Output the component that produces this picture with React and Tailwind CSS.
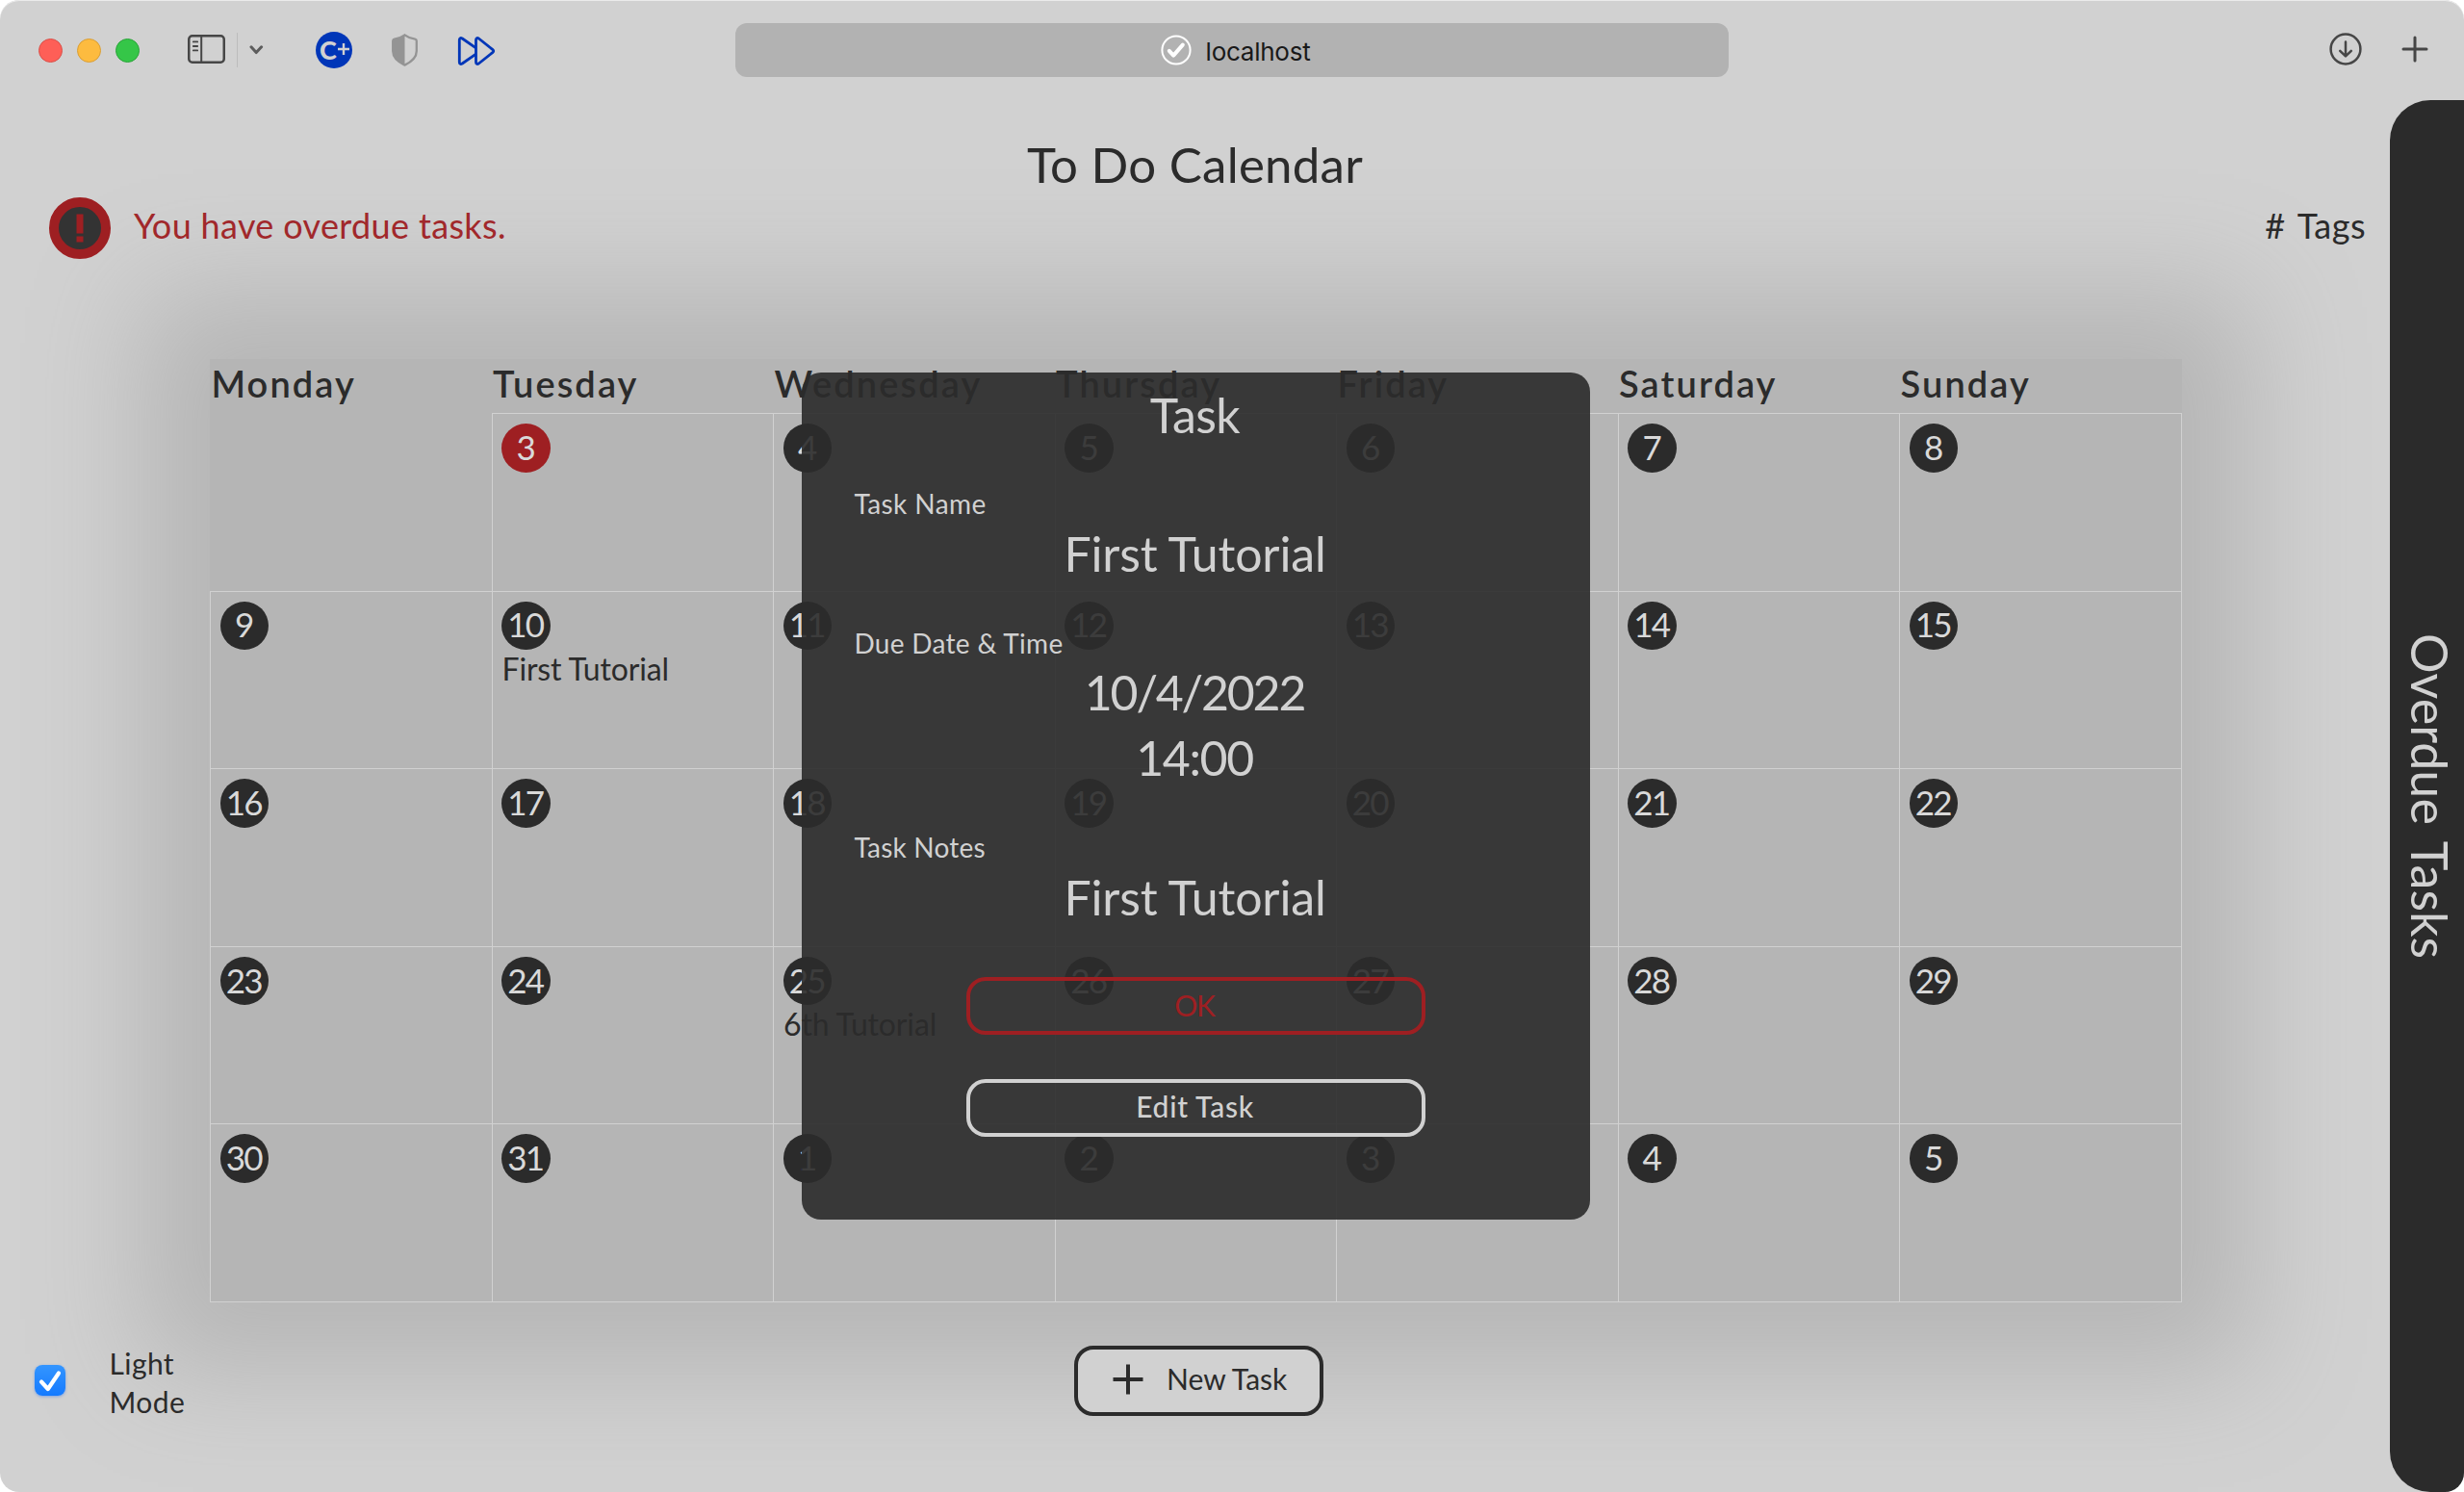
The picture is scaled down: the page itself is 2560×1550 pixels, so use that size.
import React from "react";

const DAYS = ["Monday", "Tuesday", "Wednesday", "Thursday", "Friday", "Saturday", "Sunday"];

const CELLS = [
  null, 3, 4, 5, 6, 7, 8,
  9, 10, 11, 12, 13, 14, 15,
  16, 17, 18, 19, 20, 21, 22,
  23, 24, 25, 26, 27, 28, 29,
  30, 31, 1, 2, 3, 4, 5,
];

const EVENTS = { 8: "First Tutorial", 23: "6th Tutorial" };
const TODAY_INDEX = 1;

function Toolbar() {
  return (
    <header className="flex h-[104px] shrink-0 items-center">
      <div className="flex w-[764px] shrink-0 items-center pl-[39.5px]">
        <div className="flex gap-[15px]">
          <span className="size-[25px] rounded-full border border-[#d9504a] bg-[#fe5f57]" />
          <span className="size-[25px] rounded-full border border-[#d99e35] bg-[#fdbb3f]" />
          <span className="size-[25px] rounded-full border border-[#2ba43a] bg-[#35c648]" />
        </div>
        <svg className="mb-[2px] ml-[50.5px] h-[30px] w-[39px]" viewBox="0 0 39 30" fill="none" stroke="#464646">
          <rect x="1.25" y="1.25" width="36.5" height="27.5" rx="3.5" strokeWidth="2.5" />
          <path d="M14.2 1.5V28.5" strokeWidth="2" />
          <path d="M5.8 7.4h4.4M5.8 12h4.4M5.8 16.4h4.4" strokeWidth="1.8" strokeLinecap="round" />
        </svg>
        <span className="ml-[12px] h-[36px] w-px bg-[#bcbcbc]" />
        <svg className="ml-[12px] h-[10px] w-[15px]" viewBox="0 0 15 10" fill="none" stroke="#5c5c5c" strokeWidth="3" strokeLinecap="round" strokeLinejoin="round">
          <path d="M2 1.8 7.2 7.6 12.6 1.8" />
        </svg>
        <span className="ml-[54px] flex size-[38px] items-center justify-center rounded-full bg-[#0036b8] pb-[1px] pl-[1px] font-['Lato'] font-black leading-none text-[#d1d1d1]">
          <span className="text-[27px] leading-[36px]">C</span>
          <svg className="mb-[1px] ml-px size-[12px]" viewBox="0 0 12 12" stroke="#d1d1d1" strokeWidth="2.4">
            <path d="M6 0v12M0 6h12" />
          </svg>
        </span>
        <svg className="ml-[41px] h-[34px] w-[27px]" viewBox="0 0 27 34" fill="none">
          <path d="M13.5 1.4C10.5 3.6 6.5 5.2 2.8 5.6 1.8 5.8 1.2 6.4 1.2 7.4V18c0 7 5.500 11.400 12.300 14.600C20.300 29.400 25.800 25 25.800 18V7.400c0-1-.6-1.600-1.600-1.800C20.500 5.200 16.500 3.600 13.500 1.400Z" stroke="#949494" strokeWidth="2.300" />
          <path d="M13.500 1.400C10.500 3.600 6.500 5.200 2.800 5.600 1.800 5.800 1.200 6.400 1.200 7.400V18c0 7 5.500 11.400 12.300 14.600Z" fill="#949494" />
        </svg>
        <svg className="ml-[41px] mt-[1px] h-[30px] w-[40px]" viewBox="0 0 40 30" fill="none" stroke="#0036b8" strokeWidth="2.800" strokeLinejoin="round">
          <path d="M19.500 11.800 5.300 2C3.500 1 2.300 1.600 2.300 3.500V26.500c0 1.900 1.200 2.500 3 1.500L19.500 18.200" />
          <path d="M19.500 3.500C19.500 1.600 20.700 1 22.400 2L37 13.600c1 .8 1 2 0 2.800L22.400 28c-1.700 1-2.900.4-2.900-1.500Z" />
        </svg>
      </div>
      <div className="flex h-[56px] w-[1032px] shrink-0 items-center justify-center gap-[15px] rounded-[12px] bg-[#b2b2b2] pl-[7px]">
        <svg className="size-[32px]" viewBox="0 0 32 32" fill="none" stroke="#ffffff" strokeLinecap="round" strokeLinejoin="round">
          <circle cx="16" cy="16" r="14.600" strokeWidth="2" />
          <path d="M8.800 16.800 13.200 21.600 22.800 10.600" strokeWidth="4" />
        </svg>
        <span className="pt-[3px] font-['Inter'] text-[26px] leading-[32px] tracking-[-0.250px] text-[#191919]">localhost</span>
      </div>
      <div className="ml-[624px] flex items-center gap-[41px] pb-[2px] text-[#464646]">
        <svg className="size-[34px]" viewBox="0 0 34 34" fill="none" stroke="currentColor" strokeWidth="2.500" strokeLinecap="round" strokeLinejoin="round">
          <circle cx="17" cy="17" r="15.400" />
          <path d="M17 9.500V24M11.200 18.800 17 24.400 22.800 18.800" />
        </svg>
        <svg className="mb-[1px] size-[28px]" viewBox="0 0 28 28" stroke="currentColor" strokeWidth="3" strokeLinecap="round">
          <path d="M14 2V26M2 14H26" />
        </svg>
      </div>
    </header>
  );
}

function DayCell({ day, index }) {
  const lastCol = index % 7 === 6;
  const lastRow = index >= 28;
  return (
    <div
      className={
        "flex flex-col border-[#d1d1d1] pl-[10px] pt-[10px] " +
        (day === null ? "" : "border-l border-t ") +
        (lastCol ? "border-r " : "") +
        (lastRow ? "border-b" : "")
      }
    >
      {day !== null && (
        <span
          className={
            "-ml-[0.500px] flex size-[50.500px] shrink-0 items-center justify-center rounded-full pb-[3px] pr-[3px] text-[35px] leading-[46px] tracking-[-1.800px] text-[#d9d9d9] " +
            (index === TODAY_INDEX ? "bg-[#9e1f22]" : "bg-[#2b2b2b]")
          }
        >
          <span className="-mr-[1.800px]">{day}</span>
        </span>
      )}
      {EVENTS[index] && (
        <span className="mt-px whitespace-nowrap text-[32px] leading-[38px] tracking-[-0.150px] text-[#2b2b2b]">{EVENTS[index]}</span>
      )}
    </div>
  );
}

function Calendar() {
  return (
    <section className="ml-[218px] mt-[104px] w-[2049px] bg-[#b5b5b5] shadow-[0_0_110px_72px_#b6b6b6]">
      <div className="grid h-[56px] grid-cols-[repeat(6,292.500px)_294px] pl-[1.500px] pt-[2px] text-[38px] font-semibold leading-[46px] tracking-[2.100px] text-[#2b2b2b]">
        {DAYS.map((d) => (
          <span key={d}>{d}</span>
        ))}
      </div>
      <div className="grid h-[924px] grid-cols-[repeat(6,292.500px)_294px] grid-rows-[repeat(4,184.600px)_185.600px]">
        {CELLS.map((day, i) => (
          <DayCell key={i} day={day} index={i} />
        ))}
      </div>
    </section>
  );
}

function Footer() {
  return (
    <footer className="mt-[43px] flex items-start">
      <span className="ml-[36px] mt-[22px] flex size-[32px] items-center justify-center rounded-[8px] bg-linear-to-b from-[#3395ff] to-[#147aff] shadow-[0_1px_3px_#0a60ff66]">
        <svg className="size-[24px]" viewBox="0 0 24 24" fill="none" stroke="#ffffff" strokeWidth="4.200" strokeLinecap="round" strokeLinejoin="round">
          <path d="M3 13.500 9.800 21 21 4.500" />
        </svg>
      </span>
      <p className="ml-[45.500px] w-[100.500px] text-[30px] leading-[40px] tracking-[0.400px] text-[#2b2b2b]">Light Mode</p>
      <button className="ml-[902px] mt-[2px] flex h-[73px] w-[259px] items-center rounded-[20px] border-4 border-[#2b2b2b] bg-[#d1d1d1] pl-[36px] text-[#2b2b2b]">
        <svg className="mb-[4px] size-[32px]" viewBox="0 0 32 32" stroke="currentColor" strokeWidth="4">
          <path d="M16 .5V31.500M.5 16H31.500" />
        </svg>
        <span className="ml-[24px] whitespace-nowrap pb-[6px] text-[30px] leading-[40px]">New Task</span>
      </button>
    </footer>
  );
}

function TaskDialog() {
  return (
    <div className="absolute left-[832.500px] top-[387px] flex h-[880px] w-[819px] flex-col items-center rounded-[20px] bg-[#2b2b2b]/[0.905] pt-[14px] text-[#d1d1d1]">
      <h2 className="pr-px text-[50px] leading-[60px] tracking-[-0.600px]">Task</h2>
      <p className="mt-[45px] self-start pl-[55px] text-[28px] leading-[34px] tracking-[0.400px]">Task Name</p>
      <p className="mt-[5px] pr-px text-[50px] leading-[60px] tracking-[-0.150px]">First Tutorial</p>
      <p className="mt-[46px] self-start pl-[55px] text-[28px] leading-[34px] tracking-[0.300px]">Due Date &amp; Time</p>
      <p className="pr-[2px] text-[50px] leading-[68px] tracking-[-2.200px]">10/4/2022</p>
      <p className="pr-[2px] text-[50px] leading-[68px] tracking-[-1.400px]">14:00</p>
      <p className="mt-[42px] self-start pl-[55px] text-[28px] leading-[34px] tracking-[0.200px]">Task Notes</p>
      <p className="mt-[5px] pr-px text-[50px] leading-[60px] tracking-[-0.150px]">First Tutorial</p>
      <button className="mt-[53px] h-[60px] w-[477px] rounded-[20px] border-4 border-[#9e1f22] pb-[3px] pr-[2px] text-[30px] leading-[48px] tracking-[-1.300px] text-[#9e1f22]">OK</button>
      <button className="mt-[46px] h-[60px] w-[477px] rounded-[20px] border-4 border-[#d1d1d1] pb-[4px] pr-px text-[30px] font-medium leading-[48px] tracking-[0.700px]">Edit Task</button>
    </div>
  );
}

export default function App() {
  return (
    <div className="h-[1550px] w-[2560px] overflow-hidden bg-white font-['Lato',sans-serif]">
      <div className="relative flex h-[1550px] w-[2560px] flex-col overflow-hidden rounded-[20px] bg-[#d1d1d1] shadow-[inset_0_1px_0_#ebebeb]">
        <Toolbar />
        <div className="flex min-h-0 flex-1">
          <main className="w-[2483px] shrink-0 pt-[36px]">
            <h1 className="text-center text-[51px] leading-[62px] tracking-[0.250px] text-[#2b2b2b]">To Do Calendar</h1>
            <div className="mt-[3px] flex h-[64px] items-center">
              <span className="ml-[51px] flex size-[64px] items-center justify-center rounded-full border-[10px] border-[#9e1f22] bg-[#333333]">
                <svg className="h-[30px] w-[8px]" viewBox="0 0 8 30" fill="#9e1f22">
                  <path d="M.5.500h7v20h-7zM.5 23.500h7v6h-7z" />
                </svg>
              </span>
              <p className="ml-[24px] pb-[7px] text-[36px] leading-[44px] tracking-[0.350px] text-[#a1282b]">You have overdue tasks.</p>
              <p className="ml-auto mr-[25px] pb-[7px] text-[36px] leading-[44px] tracking-[0.500px] text-[#2b2b2b] [word-spacing:3.500px]"># Tags</p>
            </div>
            <Calendar />
            <Footer />
          </main>
          <aside className="w-[77px] rounded-l-[42px] bg-[#2b2b2b]">
            <div className="flex h-full items-center pl-[11px]">
              <span className="whitespace-nowrap text-[52px] leading-[62px] tracking-[0.050px] text-[#d1d1d1] [word-spacing:5px] [writing-mode:vertical-rl]">Overdue Tasks</span>
            </div>
          </aside>
        </div>
        <TaskDialog />
      </div>
    </div>
  );
}
